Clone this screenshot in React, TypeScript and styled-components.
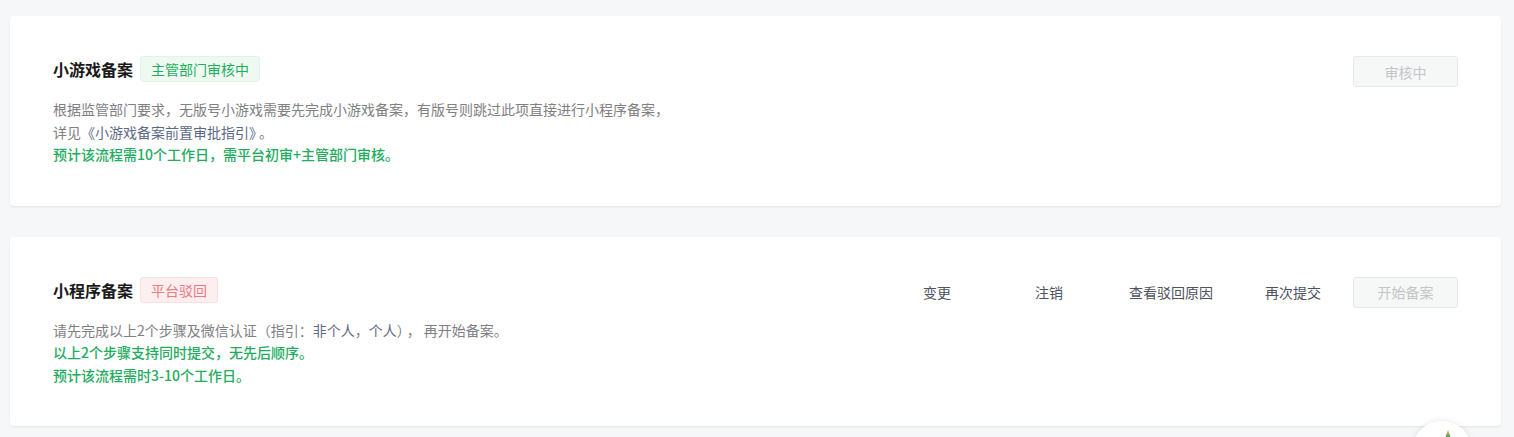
import React from "react";
import styled, { createGlobalStyle } from "styled-components";

const GlobalStyle = createGlobalStyle`
  html, body {
    margin: 0;
    padding: 0;
    background: #f6f7f9;
    font-family: "Noto Sans CJK SC", "Noto Sans", sans-serif;
    -webkit-font-smoothing: antialiased;
  }
  * { box-sizing: border-box; }
`;

const Page = styled.div`
  display: flex;
  flex-direction: column;
  gap: 31px;
  padding: 16px 13px 0 10px;
  min-height: 437px;
  background: #f6f7f9;
`;

const Card = styled.section`
  display: flex;
  align-items: flex-start;
  justify-content: space-between;
  background: #fff;
  border-radius: 4px;
  box-shadow: 0 1px 2px rgba(0, 0, 0, 0.08);
  padding: 40px 43px 40px 43px;
`;

const Main = styled.div`
  display: flex;
  flex-direction: column;
`;

const TitleRow = styled.div`
  display: flex;
  align-items: center;
  gap: 7px;
  height: 26px;
`;

const Title = styled.h3`
  margin: 0;
  font-size: 16px;
  font-weight: 700;
  color: #1a1a1a;
  line-height: 26px;
`;

const Tag = styled.span<{ $tone: "green" | "red" }>`
  display: inline-flex;
  align-items: center;
  height: 26px;
  padding: 0 10px;
  border-radius: 3px;
  font-size: 14px;
  line-height: 1;
  background: ${(p) => (p.$tone === "green" ? "#eef9f1" : "#fdeeef")};
  border: 1px solid ${(p) => (p.$tone === "green" ? "#e3f3e8" : "#fae0e2")};
  color: ${(p) => (p.$tone === "green" ? "#1fad5e" : "#ea7b83")};
`;

const Desc = styled.div`
  margin-top: 16px;
  display: flex;
  flex-direction: column;
`;

const Line = styled.div<{ $green?: boolean }>`
  font-size: 14px;
  line-height: 22.5px;
  white-space: nowrap;
  color: ${(p) => (p.$green ? "#22ac60" : "#7f8083")};
  font-weight: ${(p) => (p.$green ? 500 : 400)};
`;

const Link = styled.a`
  color: #5d6a85;
  text-decoration: none;
  cursor: pointer;
`;

const Punct = styled.span`
  margin: 0 3px;
`;

const Actions = styled.div`
  display: flex;
  align-items: center;
  gap: 8px;
`;

const TextButton = styled.button`
  min-width: 104px;
  height: 31px;
  padding: 0 20px;
  border: none;
  background: transparent;
  font-family: inherit;
  font-size: 14px;
  color: #4d5260;
  cursor: pointer;
`;

const DisabledButton = styled.button`
  min-width: 105px;
  height: 31px;
  padding: 0 20px;
  border: 1px solid #e7e8e9;
  border-radius: 3px;
  background: #f6f7f7;
  font-family: inherit;
  font-size: 14px;
  color: #c4c5c7;
  cursor: not-allowed;
`;

const Floating = styled.div`
  position: fixed;
  left: 1412px;
  top: 421px;
  width: 60px;
  height: 60px;
  border-radius: 50%;
  background: #fff;
  box-shadow: 0 0 6px rgba(0, 0, 0, 0.1);
  display: flex;
  justify-content: center;
`;

const FloatIcon = styled.svg`
  margin-top: 8px;
  margin-left: 12px;
`;

export default function App() {
  return (
    <>
      <GlobalStyle />
      <Page>
        <Card>
          <Main>
            <TitleRow>
              <Title>小游戏备案</Title>
              <Tag $tone="green">主管部门审核中</Tag>
            </TitleRow>
            <Desc>
              <Line>根据监管部门要求，无版号小游戏需要先完成小游戏备案，有版号则跳过此项直接进行小程序备案，</Line>
              <Line>
                详见<Link>《小游戏备案前置审批指引》</Link><Punct>。</Punct>
              </Line>
              <Line $green>预计该流程需10个工作日，需平台初审+主管部门审核。</Line>
            </Desc>
          </Main>
          <Actions>
            <DisabledButton disabled>审核中</DisabledButton>
          </Actions>
        </Card>
        <Card>
          <Main>
            <TitleRow>
              <Title>小程序备案</Title>
              <Tag $tone="red">平台驳回</Tag>
            </TitleRow>
            <Desc>
              <Line>
                请先完成以上2个步骤及微信认证（指引：<Link>非个人</Link>，<Link>个人</Link>）<Punct>，</Punct>再开始备案。
              </Line>
              <Line $green>以上2个步骤支持同时提交，无先后顺序。</Line>
              <Line $green>预计该流程需时3-10个工作日。</Line>
            </Desc>
          </Main>
          <Actions>
            <TextButton>变更</TextButton>
            <TextButton>注销</TextButton>
            <TextButton>查看驳回原因</TextButton>
            <TextButton>再次提交</TextButton>
            <DisabledButton disabled>开始备案</DisabledButton>
          </Actions>
        </Card>
      </Page>
      <Floating>
        <FloatIcon width="10" height="10" viewBox="0 0 10 10">
          <path d="M5 1 L8 9 L2 9 Z" fill="#f0a33a" />
          <circle cx="5" cy="7" r="2" fill="#3cb46e" />
        </FloatIcon>
      </Floating>
    </>
  );
}
